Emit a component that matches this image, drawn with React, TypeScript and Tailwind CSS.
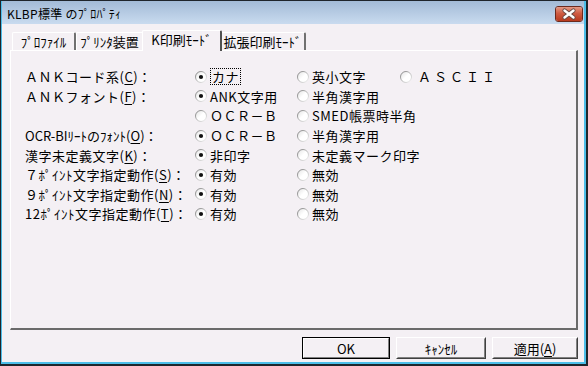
import React from "react";

const U = ({ c }: { c: string }) => (
  <span className="underline underline-offset-[2px] decoration-1">{c}</span>
);

const Radio = ({ checked }: { checked?: boolean }) => (
  <svg width="12" height="12" viewBox="0 0 12 12" className="shrink-0">
    <circle cx="6" cy="6" r="5.5" fill="url(#rfill)" stroke="url(#rstroke)" strokeWidth="1" />
    {checked && <circle cx="6" cy="6" r="2.1" fill="#111" />}
  </svg>
);

type Opt = { t: string; c?: boolean; focus?: boolean };
type Row = { label: React.ReactNode; opts: Opt[] };

const rows: Row[] = [
  {
    label: <>ＡＮＫコード系(<U c="C" />)：</>,
    opts: [{ t: "カナ", c: true, focus: true }, { t: "英小文字" }, { t: "ＡＳＣＩＩ" }],
  },
  { label: <>ＡＮＫフォント(<U c="F" />)：</>, opts: [{ t: "ANK文字用", c: true }, { t: "半角漢字用" }] },
  { label: null, opts: [{ t: "ＯＣＲ－Ｂ" }, { t: "SMED帳票時半角" }] },
  {
    label: (
      <span className="tracking-[0px]">
        OCR-BIﾘｰﾄのﾌｫﾝﾄ(<U c="O" />)：
      </span>
    ),
    opts: [{ t: "ＯＣＲ－Ｂ", c: true }, { t: "半角漢字用" }],
  },
  { label: <>漢字未定義文字(<U c="K" />)：</>, opts: [{ t: "非印字", c: true }, { t: "未定義マーク印字" }] },
  { label: <>７ﾎﾟｲﾝﾄ文字指定動作(<U c="S" />)：</>, opts: [{ t: "有効", c: true }, { t: "無効" }] },
  { label: <>９ﾎﾟｲﾝﾄ文字指定動作(<U c="N" />)：</>, opts: [{ t: "有効", c: true }, { t: "無効" }] },
  { label: <>12ﾎﾟｲﾝﾄ文字指定動作(<U c="T" />)：</>, opts: [{ t: "有効", c: true }, { t: "無効" }] },
];

const colW = ["w-[102px]", "w-[103px]", "w-[110px]"];

const Tab = ({ label, w, selected }: { label: string; w: string; selected?: boolean }) =>
  selected ? (
    <div
      className={`${w} h-[21px] mx-[-2px] relative z-10 bg-[#f4f0f4] border-l border-t border-white border-r-2 border-r-[#505050] rounded-t-[2px] flex items-center justify-center pb-[3px]`}
    >
      {label}
    </div>
  ) : (
    <div
      className={`${w} h-[18px] mt-[2px] bg-[#f4f0f4] border-l border-t border-white border-r-2 border-r-[#707070] rounded-t-[2px] flex items-center justify-center`}
    >
      {label}
    </div>
  );

const Btn = ({ children, def }: { children: React.ReactNode; def?: boolean }) => (
  <div
    className={`h-[22px] flex items-center justify-center bg-[#f4f0f4] ${
      def ? "border border-black" : "border border-t-white border-l-white border-r-[#404040] border-b-[#404040]"
    }`}
  >
    <div
      className={`w-full h-full flex items-center justify-center border ${
        def ? "border-t-white border-l-white border-r-[#808080] border-b-[#808080]" : "border-t-transparent border-l-transparent border-r-[#808080] border-b-[#808080]"
      }`}
    >
      {children}
    </div>
  </div>
);

export default function App() {
  return (
    <div className="w-[588px] h-[366px] bg-[#1f252b] pt-px pl-px pr-[2px] pb-[2px] font-['Noto_Sans_CJK_JP','Noto_Sans',sans-serif] text-black">
      <svg width="0" height="0" className="absolute">
        <defs>
          <linearGradient id="rstroke" x1="0" y1="0" x2="1" y2="1">
            <stop offset="0" stopColor="#7c7c7c" />
            <stop offset="0.5" stopColor="#b8b8b8" />
            <stop offset="1" stopColor="#f4f4f4" />
          </linearGradient>
          <linearGradient id="rfill" x1="0" y1="0" x2="1" y2="1">
            <stop offset="0" stopColor="#e2e2e2" />
            <stop offset="0.5" stopColor="#ffffff" />
            <stop offset="1" stopColor="#ffffff" />
          </linearGradient>
          <linearGradient id="xbtn" x1="0" y1="0" x2="0" y2="1">
            <stop offset="0" stopColor="#e49a86" />
            <stop offset="0.45" stopColor="#cf5c43" />
            <stop offset="1" stopColor="#b8391e" />
          </linearGradient>
        </defs>
      </svg>
      <div className="h-full flex flex-col border-l border-r-2 border-b-2 border-[#4cbde8]">
        {/* title bar */}
        <div className="h-[23px] shrink-0 flex items-center pl-[5px] pr-[1px] bg-gradient-to-b from-[#a3bbd7] to-[#c9dbef]">
          <span className="text-[12px] leading-none pt-[2px] tracking-[0.3px]">KLBP標準 のﾌﾟﾛﾊﾟﾃｨ</span>
          <div className="ml-auto w-[28px] h-[16px] mt-[2px] rounded-[3px] border border-[#6b2a1e] overflow-hidden">
            <svg width="26" height="14" viewBox="0 0 26 14">
              <rect x="0" y="0" width="26" height="14" fill="url(#xbtn)" />
              <path d="M8.5 3.5 L17.5 10.5 M17.5 3.5 L8.5 10.5" stroke="#6a4a44" strokeWidth="4.2" strokeLinecap="round" />
              <path d="M8.5 3.5 L17.5 10.5 M17.5 3.5 L8.5 10.5" stroke="#ffffff" strokeWidth="2.4" strokeLinecap="round" />
            </svg>
          </div>
        </div>

        {/* content */}
        <div className="flex-1 flex flex-col bg-[#f4f0f4] text-[13px]">
          {/* tabs */}
          <div className="pt-[6px] pl-[10px] flex items-start h-[27px] -mb-px relative z-10 text-[13px] leading-none">
            <Tab label="ﾌﾟﾛﾌｧｲﾙ" w="w-[64px]" />
            <Tab label="ﾌﾟﾘﾝﾀ装置" w="w-[68px]" />
            <Tab label="K印刷ﾓｰﾄﾞ" w="w-[80px]" selected />
            <Tab label="拡張印刷ﾓｰﾄﾞ" w="w-[86px]" />
          </div>

          {/* panel */}
          <div className="ml-[8px] mr-[6px] h-[280px] border-t border-l border-white border-r-2 border-b-2 border-r-[#6a6a6a] border-b-[#6a6a6a] flex flex-col pt-[16px] pl-[14px] leading-none tracking-[0.5px]">
            {rows.map((r, i) => (
              <div key={i} className="h-[19.6px] flex items-center">
                <div className="w-[170px] whitespace-nowrap">{r.label}</div>
                {r.opts.map((o, j) => (
                  <div key={j} className={`${colW[j]} flex items-center gap-[3px] whitespace-nowrap`}>
                    <Radio checked={o.c} />
                    {o.focus ? (
                      <span className="outline-1 outline-dotted outline-black px-[1px] py-[1px] ml-[1px]">{o.t}</span>
                    ) : (
                      <span className={j === 2 ? "tracking-[3px] ml-[3px]" : ""}>{o.t}</span>
                    )}
                  </div>
                ))}
              </div>
            ))}
          </div>

          {/* buttons */}
          <div className="mt-[7px] flex justify-end pr-[6px] gap-[5px] text-[13px] leading-none">
            <div className="w-[88px]">
              <Btn def>OK</Btn>
            </div>
            <div className="w-[90px] ml-[1px]">
              <Btn>ｷｬﾝｾﾙ</Btn>
            </div>
            <div className="w-[86px] ml-[1px]">
              <Btn>
                適用(<U c="A" />)
              </Btn>
            </div>
          </div>
        </div>
      </div>
    </div>
  );
}
